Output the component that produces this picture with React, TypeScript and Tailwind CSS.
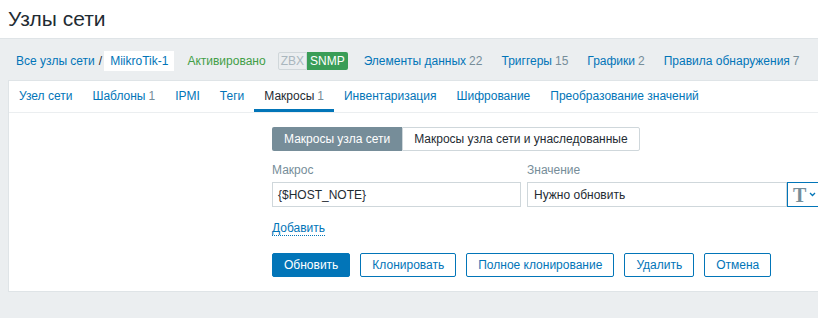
import React from 'react';

const link = 'text-[#0275b8]';

function Count({ n }: { n: number }) {
  return <span className="text-[#768d99] ml-[3px]">{n}</span>;
}

export default function App() {
  const tabs: { label: string; count?: number; active?: boolean }[] = [
    { label: 'Узел сети' },
    { label: 'Шаблоны', count: 1 },
    { label: 'IPMI' },
    { label: 'Теги' },
    { label: 'Макросы', count: 1, active: true },
    { label: 'Инвентаризация' },
    { label: 'Шифрование' },
    { label: 'Преобразование значений' },
  ];

  return (
    <div
      className="w-[818px] h-[318px] overflow-hidden bg-[#ebeef0] text-[12px] text-[#1f2c33]"
      style={{ fontFamily: '"Liberation Sans", Arial, sans-serif' }}
    >
      {/* Header */}
      <div className="h-[39px] bg-white border-b border-[#dfe4e7] px-[8px] flex items-center">
        <h1 className="text-[21px] leading-none text-[#1f2c33] font-normal -mt-[2px]">Узлы сети</h1>
      </div>

      {/* Breadcrumbs / host nav */}
      <div className="flex items-center h-[41px] pl-[16px] pt-[3px] whitespace-nowrap overflow-hidden">
        <span className={link}>Все узлы сети</span>
        <span className="ml-[4px] mr-[2px] text-[#1f2c33]">/</span>
        <span className={`${link} bg-white px-[6px] h-[20px] flex items-center`}>MiikroTik-1</span>
        <span className="ml-[13px] text-[#429e47]">Активировано</span>
        <span className="ml-[12px] flex h-[18px]">
          <span className="px-[2px] flex items-center border border-[#d0d7da] bg-[#ebeef0] text-[#aab7be] rounded-l-[2px]">ZBX</span>
          <span className="px-[3px] flex items-center bg-[#3a9d57] text-white rounded-r-[2px]">SNMP</span>
        </span>
        <span className={`${link} ml-[16px]`}>Элементы данных<Count n={22} /></span>
        <span className={`${link} ml-[19px]`}>Триггеры<Count n={15} /></span>
        <span className={`${link} ml-[19px]`}>Графики<Count n={2} /></span>
        <span className={`${link} ml-[19px]`}>Правила обнаружения<Count n={7} /></span>
        <span className={`${link} ml-[19px]`}>Веб</span>
      </div>

      {/* Panel */}
      <div className="ml-[8px] w-[830px] bg-white border border-[#dfe4e7] border-r-0">
        <div className="flex h-[32px] border-b border-[#ebeef0] whitespace-nowrap">
          {tabs.map((t) => (
            <div
              key={t.label}
              className={`px-[10px] flex items-center pt-[1px] border-b-[3px] ${
                t.active ? 'border-[#0275b8] text-[#1f2c33]' : 'border-transparent text-[#0275b8]'
              }`}
            >
              {t.label}
              {t.count !== undefined && <Count n={t.count} />}
            </div>
          ))}
        </div>

        <div className="pl-[263px] pt-[14px] pb-[14px]">
          {/* segmented */}
          <div className="flex h-[24px] w-fit">
            <div className="px-[12px] flex items-center bg-[#768d99] text-white rounded-l-[2px]">Макросы узла сети</div>
            <div className="px-[11px] flex items-center border border-[#cfd7db] text-[#1f2c33] rounded-r-[2px]">Макросы узла сети и унаследованные</div>
          </div>

          <div className="flex mt-[10px] text-[#768d99]">
            <div className="w-[255px]">Макрос</div>
            <div>Значение</div>
          </div>

          <div className="flex mt-[3px] h-[25px]">
            <div className="w-[249px] border border-[#cfd7db] px-[5px] flex items-center text-[#1f2c33]">{'{$HOST_NOTE}'}</div>
            <div className="ml-[6px] w-[260px] border border-[#cfd7db] px-[6px] flex items-center text-[#1f2c33]">Нужно обновить</div>
            <div className="w-[40px] border border-[#0275b8] flex items-center pl-[5px] gap-[3px]">
              <span className="text-[#768d99] text-[20px] leading-none font-bold" style={{ fontFamily: '"Liberation Serif", serif' }}>T</span>
              <svg width="7" height="5" viewBox="0 0 7 5">
                <path d="M1 1l2.5 2.5L6 1" fill="none" stroke="#0275b8" strokeWidth="1.3" />
              </svg>
            </div>
          </div>

          <div className="mt-[12px]">
            <span className={`${link} border-b border-dotted border-[#0275b8]`}>Добавить</span>
          </div>

          <div className="flex gap-[10px] mt-[16px]">
            <button className="h-[24px] px-[11px] bg-[#0275b8] text-white rounded-[2px] border border-[#0275b8]">Обновить</button>
            <button className={`h-[24px] px-[11px] ${link} rounded-[2px] border border-[#0275b8]`}>Клонировать</button>
            <button className={`h-[24px] px-[11px] ${link} rounded-[2px] border border-[#0275b8]`}>Полное клонирование</button>
            <button className={`h-[24px] px-[11px] ${link} rounded-[2px] border border-[#0275b8]`}>Удалить</button>
            <button className={`h-[24px] px-[11px] ${link} rounded-[2px] border border-[#0275b8]`}>Отмена</button>
          </div>
        </div>
      </div>
    </div>
  );
}
